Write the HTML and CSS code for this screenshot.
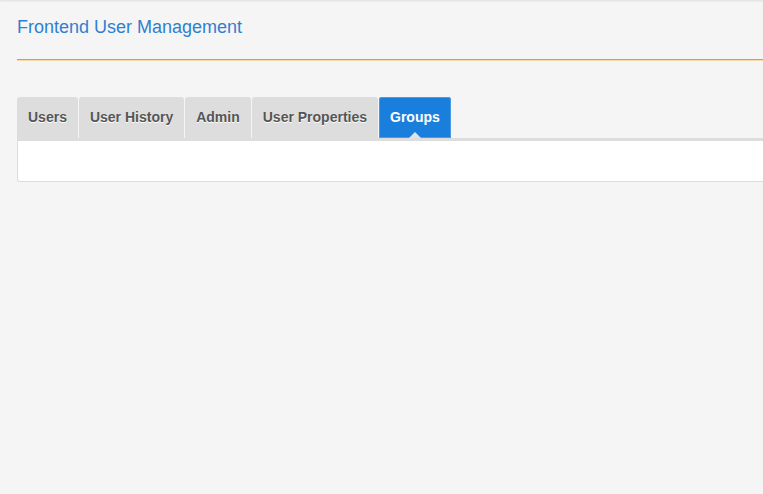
FILE: index.html
```html
<!DOCTYPE html>
<html>
<head>
<meta charset="utf-8">
<link rel="stylesheet" href="styles.css">
</head>
<body>
<div class="page">
  <div class="header">
    <h1 class="title">Frontend User Management</h1>
  </div>
  <div class="rule"></div>
  <div class="tabs-wrap">
    <ul class="tabs">
      <li class="tab">Users</li>
      <li class="tab">User History</li>
      <li class="tab">Admin</li>
      <li class="tab">User Properties</li>
      <li class="tab active">Groups</li>
    </ul>
    <div class="panel"></div>
  </div>
</div>
</body>
</html>
```
FILE: styles.css
```css
html, body {
  margin: 0;
  padding: 0;
  background: #f5f5f5;
  font-family: "Liberation Sans", Arial, sans-serif;
}
body {
  box-shadow: inset 0 2px 2px -1px #dedede;
  min-height: 494px;
}
.page {
  padding: 0 0 0 17px;
}
.header {
  padding-top: 16px;
  height: 43px;
}
.rule {
  height: 1px;
  background: #eb9a2a;
  box-shadow: 0 1px 0 #f8d9a8;
}
.title {
  margin: 0;
  font-size: 18px;
  font-weight: normal;
  line-height: 22px;
  color: #2f7fd0;
}
.tabs-wrap {
  margin-top: 37px;
}
.tabs {
  list-style: none;
  margin: 0;
  padding: 0;
  display: flex;
  gap: 1px;
  border-bottom: 3px solid #dddddd;
}
.tab {
  position: relative;
  height: 41px;
  line-height: 41px;
  padding: 0 11px;
  background: #dddddd;
  color: #555555;
  font-weight: bold;
  font-size: 14px;
  text-shadow: 0 1px 0 #ffffff;
  border-radius: 3px 3px 0 0;
}
.tab.active {
  background: #1a7fdc;
  color: #ffffff;
  text-shadow: none;
  box-shadow: inset 0 0 0 1px #4b9ae4;
}
.tab.active::after {
  content: "";
  position: absolute;
  left: 50%;
  bottom: 0;
  margin-left: -6px;
  border-left: 6px solid transparent;
  border-right: 6px solid transparent;
  border-bottom: 6px solid #dde3ea;
}
.panel {
  height: 40px;
  background: #ffffff;
  border-left: 1px solid #dddddd;
  border-bottom: 1px solid #dddddd;
  border-bottom-left-radius: 3px;
}
```
